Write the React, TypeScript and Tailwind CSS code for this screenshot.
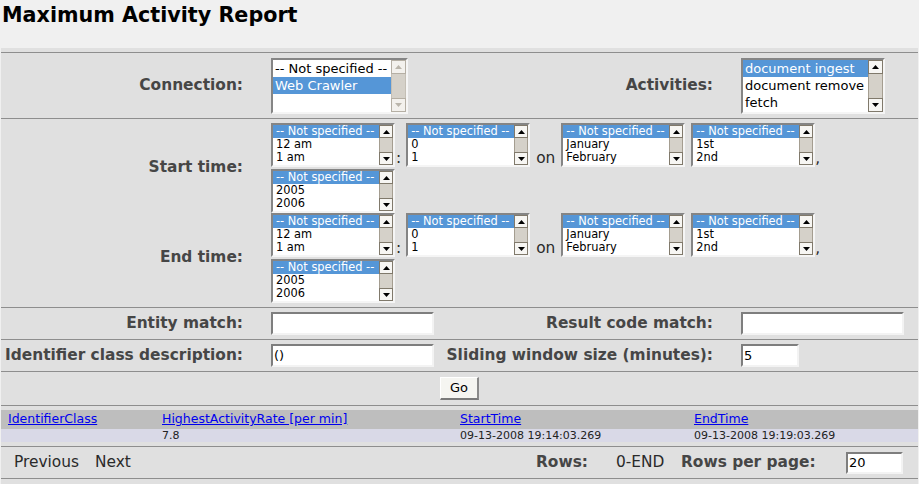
import React from 'react'

const Arrow = ({ dir, disabled }: { dir: 'up' | 'down'; disabled?: boolean }) => (
  <svg width="7" height="4" viewBox="0 0 7 4" className="block">
    <polygon points={dir === 'up' ? '3.5,0 7,4 0,4' : '0,0 7,0 3.5,4'} fill={disabled ? '#bab5ab' : '#000'} />
  </svg>
)

const ScrollBar = ({ big, disabled }: { big?: boolean; disabled?: boolean }) => {
  const btn = `${big ? 'h-[14px]' : 'h-[13px]'} flex items-center justify-center border ${
    disabled ? 'border-[#b5afa4] bg-[#f3f1ed]' : 'border-[#80796b] bg-[#f7f6f3]'
  }`
  return (
    <div className={`flex flex-col shrink-0 ${big ? 'w-[15px]' : 'w-[14px]'} bg-[#d5d1c9]`}>
      <div className={btn}>
        <Arrow dir="up" disabled={disabled} />
      </div>
      <div className={`flex-1 border-x ${disabled ? 'border-[#c4bfb5]' : 'border-[#a49d90]'}`} />
      <div className={btn}>
        <Arrow dir="down" disabled={disabled} />
      </div>
    </div>
  )
}

const ListBox = ({
  w,
  small,
  options,
  selected,
  disabled,
}: {
  w: string
  small?: boolean
  options: string[]
  selected: number
  disabled?: boolean
}) => (
  <div
    className={`flex shrink-0 bg-white border-2 border-t-[#858585] border-l-[#858585] border-r-[#f5f5f5] border-b-[#f5f5f5] ${w} ${
      small ? 'h-[44px]' : 'h-[56px]'
    }`}
  >
    <div className="flex-1 min-w-0">
      {options.map((o, i) => (
        <div
          key={i}
          className={`whitespace-nowrap overflow-hidden ${
            small ? 'h-[13px] leading-[13px] text-[11.4px] pl-[3px]' : 'h-[17px] leading-[17px] text-[13px] pl-[2px]'
          } ${i === selected ? 'bg-[#5596d7] text-white' : 'text-black'}`}
        >
          {o}
        </div>
      ))}
    </div>
    <ScrollBar big={!small} disabled={disabled} />
  </div>
)

const TextBox = ({ w, value, h = 'h-[23px]' }: { w: string; value: string; h?: string }) => (
  <input
    readOnly
    value={value}
    className={`${w} ${h} block bg-white border-2 border-t-[#7e7e7e] border-l-[#7e7e7e] border-r-[#f3f3f3] border-b-[#f3f3f3] text-[13px] px-[1px] text-black outline-none`}
  />
)

const Label = ({ children }: { children: React.ReactNode }) => (
  <div className="text-right pr-[24px] text-[15.4px] font-bold text-[#464646] whitespace-nowrap">{children}</div>
)

const Rule = () => <div className="h-px bg-[#8e8e8e]" />

const NS = '-- Not specified --'

const TimeBlock = () => (
  <div className="pl-[4px] flex flex-col gap-[2px]">
    <div className="flex items-end text-[15.4px] text-[#2a2a2a]">
      <ListBox w="w-[124px]" small options={[NS, '12 am', '1 am']} selected={0} />
      <span className="ml-[1px] leading-[18px]">:</span>
      <div className="ml-[5px]">
        <ListBox w="w-[124px]" small options={[NS, '0', '1']} selected={0} />
      </div>
      <span className="ml-[6px] leading-[18px]">on</span>
      <div className="ml-[6px]">
        <ListBox w="w-[124px]" small options={[NS, 'January', 'February']} selected={0} />
      </div>
      <div className="ml-[6px]">
        <ListBox w="w-[124px]" small options={[NS, '1st', '2nd']} selected={0} />
      </div>
      <span className="leading-[18px]">,</span>
    </div>
    <ListBox w="w-[124px]" small options={[NS, '2005', '2006']} selected={0} />
  </div>
)

export default function App() {
  const headers = ['IdentifierClass', 'HighestActivityRate [per min]', 'StartTime', 'EndTime']
  const row = ['', '7.8', '09-13-2008 19:14:03.269', '09-13-2008 19:19:03.269']

  return (
    <div className="w-[919px] h-[484px] overflow-hidden bg-[#f0f0f0] font-['DejaVu_Sans',sans-serif]">
      <h1 className="h-[48px] pt-[3px] pl-[2px] text-[20.7px] leading-[24px] font-bold text-black">
        Maximum Activity Report
      </h1>

      <div className="mx-[1px] bg-[#e0e0e0] pt-[4px] pb-[6px]">
        <Rule />
        <div className="grid grid-cols-[266px_178px_292px_1fr] h-[65px] items-center">
          <Label>Connection:</Label>
          <div className="pl-[4px]">
            <ListBox w="w-[137px]" options={[NS, 'Web Crawler', '']} selected={1} disabled />
          </div>
          <Label>Activities:</Label>
          <div className="pl-[4px]">
            <ListBox w="w-[144px]" options={['document ingest', 'document remove', 'fetch']} selected={0} />
          </div>
        </div>
        <Rule />
        <div className="grid grid-cols-[266px_1fr] items-center py-[4px]">
          <Label>Start time:</Label>
          <TimeBlock />
          <Label>End time:</Label>
          <TimeBlock />
        </div>
        <Rule />
        <div className="grid grid-cols-[266px_178px_292px_1fr] h-[31px] items-center">
          <Label>Entity match:</Label>
          <div className="pl-[4px]">
            <TextBox w="w-[163px]" value="" />
          </div>
          <Label>Result code match:</Label>
          <div className="pl-[4px]">
            <TextBox w="w-[163px]" value="" />
          </div>
        </div>
        <Rule />
        <div className="grid grid-cols-[266px_178px_292px_1fr] h-[31px] items-center">
          <Label>Identifier class description:</Label>
          <div className="pl-[4px]">
            <TextBox w="w-[163px]" value="()" />
          </div>
          <Label>Sliding window size (minutes):</Label>
          <div className="pl-[4px]">
            <TextBox w="w-[58px]" value="5" />
          </div>
        </div>
        <Rule />
        <div className="flex h-[33px] items-center justify-center">
          <button className="w-[39px] h-[23px] bg-[#f5f5f1] border-t border-l border-r-2 border-b-2 border-t-white border-l-white border-r-[#8a8a8a] border-b-[#7a7a7a] text-[13px] text-black">
            Go
          </button>
        </div>
        <Rule />
        <div className="py-[4px]">
          <div className="grid grid-cols-[154px_298px_234px_1fr] h-[19px] items-center bg-[#bebebe] text-[12.5px]">
            {headers.map((h) => (
              <div key={h} className="pl-[7px] whitespace-nowrap">
                <a href="#" className="text-[#0000ee] underline">
                  {h}
                </a>
              </div>
            ))}
          </div>
          <div className="grid grid-cols-[154px_298px_234px_1fr] h-[13px] items-center bg-[#d9d9e7] text-[11px] leading-[13px] text-[#222]">
            {row.map((c, i) => (
              <div key={i} className="pl-[7px] whitespace-nowrap">
                {c}
              </div>
            ))}
          </div>
        </div>
        <Rule />
        <div className="flex h-[31px] items-center text-[15.4px]">
          <div className="w-[535px] pl-[13px] flex text-[#2a2a2a]">
            <span>Previous</span>
            <span className="ml-[16px]">Next</span>
          </div>
          <span className="w-[80px] font-bold text-[#464646]">Rows:</span>
          <span className="w-[65px] text-[#2a2a2a]">0-END</span>
          <span className="w-[165px] font-bold text-[#464646]">Rows per page:</span>
          <TextBox w="w-[57px]" h="h-[22px]" value="20" />
        </div>
        <Rule />
      </div>
    </div>
  )
}
